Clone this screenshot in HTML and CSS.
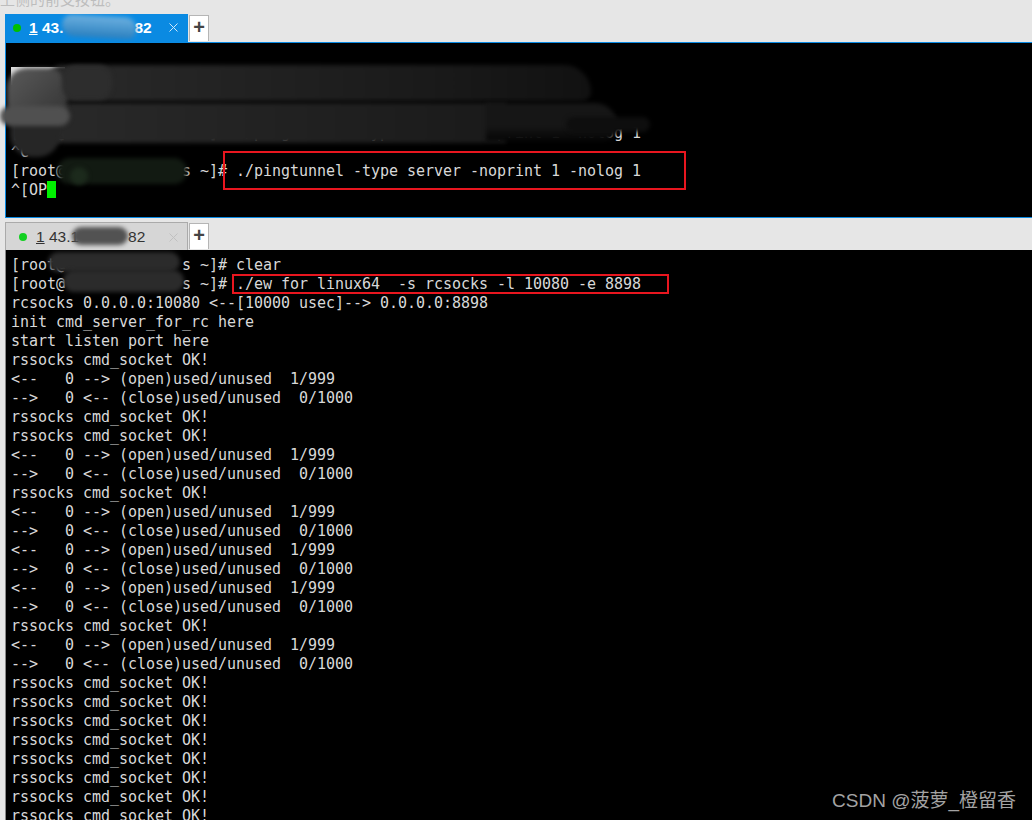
FILE: index.html
```html
<!DOCTYPE html>
<html lang="zh">
<head>
<meta charset="utf-8">
<title>Terminal sessions</title>
<link rel="stylesheet" href="styles.css">
</head>
<body>
<div class="page-note"><span>上侧的前支按钮。</span></div>
<section class="pane pane-active">
  <div class="tabbar">
    <div class="tab tab-active"><i class="dot"></i><span class="tab-label"><u>1</u> 43.<span class="gap gap-a"></span>82</span>
      <svg class="close" viewBox="0 0 9 9"><path d="M.5.5l8 8M8.5.5l-8 8"/></svg></div>
    <div class="add">+</div>
    <div class="blur blue-smear"></div>
  </div>
  <div class="term term-top">
<pre class="text">

<span class="hidden-row">[root@</span>


[root@             s ~]# ./pingtunnel -type server -noprint 1 -nolog 1
^C
[root@             s ~]# ./pingtunnel -type server -noprint 1 -nolog 1
^[OP<b class="cursor"></b></pre>
    <div class="blur s1"></div>
    <div class="blur s2"></div>
    <div class="blur s2c"></div>
    <div class="blur s2b"></div>
    <div class="blur s9"></div>
    <div class="blur s3"></div>
    <div class="blur s5"></div>
    <div class="blur s6"></div>
    <div class="blur s6b"></div>
    <div class="mark m1"></div>
  </div>
  <div class="blur s4"></div>
</section>
<section class="pane pane-idle">
  <div class="tabbar">
    <div class="tab tab-idle"><i class="dot"></i><span class="tab-label"><u>1</u> 43.1<span class="gap gap-b"></span>82</span>
      <svg class="close" viewBox="0 0 9 9"><path d="M.5.5l8 8M8.5.5l-8 8"/></svg></div>
    <div class="add">+</div>
    <div class="blur tab-smear"></div>
  </div>
  <div class="term term-bottom">
<pre class="text">[root@             s ~]# clear
[root@             s ~]# ./ew for linux64  -s rcsocks -l 10080 -e 8898
rcsocks 0.0.0.0:10080 &lt;--[10000 usec]--&gt; 0.0.0.0:8898
init cmd_server_for_rc here
start listen port here
rssocks cmd_socket OK!
&lt;--   0 --&gt; (open)used/unused  1/999
--&gt;   0 &lt;-- (close)used/unused  0/1000
rssocks cmd_socket OK!
rssocks cmd_socket OK!
&lt;--   0 --&gt; (open)used/unused  1/999
--&gt;   0 &lt;-- (close)used/unused  0/1000
rssocks cmd_socket OK!
&lt;--   0 --&gt; (open)used/unused  1/999
--&gt;   0 &lt;-- (close)used/unused  0/1000
&lt;--   0 --&gt; (open)used/unused  1/999
--&gt;   0 &lt;-- (close)used/unused  0/1000
&lt;--   0 --&gt; (open)used/unused  1/999
--&gt;   0 &lt;-- (close)used/unused  0/1000
rssocks cmd_socket OK!
&lt;--   0 --&gt; (open)used/unused  1/999
--&gt;   0 &lt;-- (close)used/unused  0/1000
rssocks cmd_socket OK!
rssocks cmd_socket OK!
rssocks cmd_socket OK!
rssocks cmd_socket OK!
rssocks cmd_socket OK!
rssocks cmd_socket OK!
rssocks cmd_socket OK!
rssocks cmd_socket OK!</pre>
    <div class="blur s7"></div>
    <div class="blur s8"></div>
    <div class="mark m2"></div>
  </div>
</section>
<div class="watermark">CSDN @菠萝_橙留香</div>
</body>
</html>
```
FILE: styles.css
```css
html, body { margin: 0; padding: 0; height: 820px; overflow: hidden; }
body { background: #e6e6e6; position: relative; font-family: "Liberation Sans", sans-serif; }
.page-note { height: 14px; overflow: hidden; position: relative; }
.page-note span { display: block; margin-top: -11px; font: 15px/20px "Noto Sans CJK SC", sans-serif; color: #bdbdbd; }
.pane { margin-left: 5px; position: relative; }
.pane-idle { margin-top: 4px; }
.tabbar { display: flex; height: 28px; position: relative; overflow: hidden; }
.tab { width: 183px; box-sizing: border-box; display: flex; align-items: center; position: relative; font-size: 15.5px; }
.tab-active { background: #0a8ae2; color: #fff; font-weight: 700; }
.tab-idle { background: #d6d6d6; color: #333; border: 1px solid #aaa; border-bottom: 0; }
.dot { width: 8px; height: 8px; border-radius: 50%; background: #00c000; margin: 0 8px 0 8px; }
.tab-idle .dot { background: #12d021; margin-left: 13px; margin-right: 9px; }
.tab-label { white-space: pre; }
.gap { display: inline-block; }
.gap-a { width: 71px; }
.gap-b { width: 49px; }
.close { position: absolute; right: 10px; top: 9px; width: 9px; height: 9px; fill: none; stroke: #cfe8fa; stroke-width: 1; }
.tab-idle .close { stroke: #c0c0c0; right: 9px; top: 10px; }
.add { width: 20px; margin-left: 1px; height: 26px; margin-top: 1px; box-sizing: border-box; background: #fff; border: 1px solid #b5b5b5; border-bottom: 0; color: #444; font: 700 20px/23px "Liberation Sans", sans-serif; text-align: center; }
.term { background: #000; position: relative; overflow: hidden; }
.term-top { height: 176px; box-sizing: border-box; border-top: 1px solid #0a8ae2; border-bottom: 1px solid #0a8ae2; border-left: 1px solid #0a8ae2; }
.term-bottom { height: 570px; border-left: 1px solid #888; }
.text { margin: 0; padding: 6px 0 0 5px; font: 15px/19px "DejaVu Sans Mono", monospace; letter-spacing: -0.03px; color: #d8d8d8; }
.term-top .text { padding-top: 5px; }
.hidden-row { background: #ddd; color: #ddd; }
.cursor { display: inline-block; width: 9px; height: 17px; background: #00f000; vertical-align: -3px; }
.blur { position: absolute; filter: blur(2px); }
.blue-smear { left: 57px; top: 2px; width: 74px; height: 22px; border-radius: 12px 14px 10px 16px; background: linear-gradient(#6cb0e0, #2a7fbe); transform: rotate(3deg); }
.tab-smear { left: 67px; top: 5px; width: 56px; height: 18px; border-radius: 10px; background: #525252; }
.s1 { left: 40px; top: 22px; width: 545px; height: 36px; background: linear-gradient(90deg, #2a2a2a, #1a1a1a 70%, #111); border-radius: 18px 30px 10px 6px; }
.s2 { left: 20px; top: 60px; width: 480px; height: 40px; background: linear-gradient(90deg, #2a2a2a, #1a1a1a); border-radius: 6px 0 0 16px; }
.s2c { left: 480px; top: 60px; width: 132px; height: 38px; background: linear-gradient(#161616 60%, #050505); border-radius: 0 26px 16px 0; }
.s2b { left: 560px; top: 74px; width: 84px; height: 15px; background: #0e0e0e; border-radius: 8px; }
.s9 { left: 4px; top: 58px; width: 50px; height: 56px; background: #262626; border-radius: 22px; }
.s3 { left: 1px; top: 25px; width: 60px; height: 53px; background: linear-gradient(135deg, #5a5a5a, #333); border-radius: 20px; }
.s4 { left: -5px; top: 92px; width: 70px; height: 20px; background: #505050; border-radius: 10px; }
.s5 { left: 56px; top: 22px; width: 50px; height: 35px; background: #2d2d2d; border-radius: 14px; }
.s6 { left: 51px; top: 115px; width: 130px; height: 26px; background: #121a12; border-radius: 14px; }
.s6b { left: 64px; top: 124px; width: 18px; height: 18px; background: #1c2a1c; border-radius: 50%; }
.s7 { left: 42px; top: 2px; width: 132px; height: 20px; background: #2b2b2b; border-radius: 10px; }
.s8 { left: 57px; top: 20px; width: 121px; height: 22px; background: #2b2b2b; border-radius: 11px; }
.mark { position: absolute; box-sizing: border-box; border: 2px solid #e8161f; z-index: 2; }
.m1 { left: 217px; top: 108px; width: 463px; height: 39px; }
.m2 { left: 226px; top: 24px; width: 437px; height: 20px; }
.watermark { position: absolute; right: 16px; top: 788px; font: 19px/26px "Liberation Sans", "Noto Sans CJK SC", sans-serif; color: #a3a3a3; }
```
